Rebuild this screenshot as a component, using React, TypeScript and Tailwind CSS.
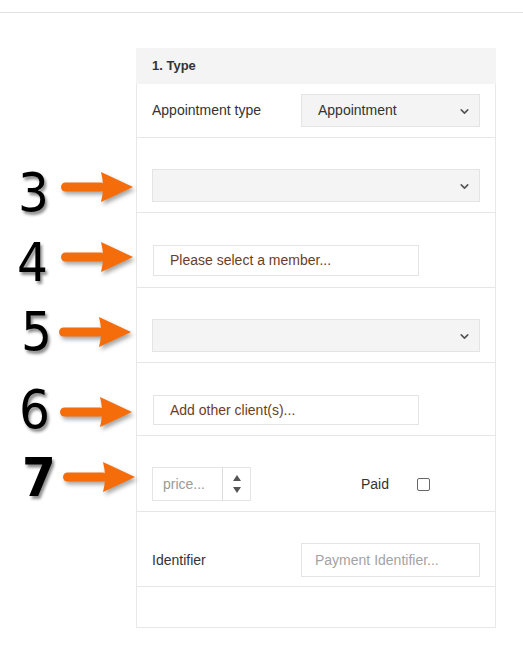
import { ChevronDown } from 'lucide-react'

const font = { fontFamily: '"Liberation Sans", Arial, sans-serif' }

function Arrow({ left, top }: { left: number; top: number }) {
  return (
    <svg
      className="absolute [filter:drop-shadow(2px_3px_2px_rgba(0,0,0,0.35))]"
      style={{ left, top }}
      width="72"
      height="30"
      viewBox="0 0 72 30"
    >
      <rect x="0" y="10.5" width="44" height="9" rx="4.5" fill="#f56d0b" />
      <path d="M40 0 L72 15 L40 30 Q44 15 40 0 Z" fill="#f56d0b" />
    </svg>
  )
}

function Num({ n, left, top, heavy }: { n: string; left: number; top: number; heavy?: boolean }) {
  return (
    <div
      className={`absolute text-[54px] leading-[54px] text-black [text-shadow:2px_3px_3px_rgba(0,0,0,0.45)] ${heavy ? 'font-bold' : 'font-normal'}`}
      style={{ left, top, fontFamily: '"Liberation Sans Narrow", "DejaVu Sans Condensed", sans-serif' }}
    >
      {n}
    </div>
  )
}

function Select({ value, className }: { value?: string; className: string }) {
  return (
    <div
      className={`relative flex h-[33px] items-center border border-[#e4e4e4] bg-[#f4f4f4] pl-[16px] text-[14px] text-[#333] ${className}`}
    >
      {value}
      <ChevronDown size={13} strokeWidth={3} className="absolute right-[8px] top-[10px] text-[#555]" />
    </div>
  )
}

export default function App() {
  const annotations = [
    { n: '3', nl: 18, nt: 166, al: 61, at: 172 },
    { n: '4', nl: 17, nt: 236, al: 61, at: 242 },
    { n: '5', nl: 21, nt: 305, al: 59, at: 317 },
    { n: '6', nl: 19, nt: 383, al: 60, at: 397 },
    { n: '7', nl: 22, nt: 451, al: 63, at: 462, heavy: true },
  ]

  return (
    <div className="relative min-h-[665px] bg-white" style={font}>
      <div className="h-[13px] border-b border-[#e2e2e2]" />

      <div className="ml-[136px] mt-[35px] w-[360px] border-x border-b border-[#e8e8e8]">
        <div className="-mx-px flex h-[36px] items-center bg-[#f4f4f4] px-[16px] text-[13px] font-bold text-[#333]">
          1. Type
        </div>

        <div className="flex h-[54px] items-center border-b border-[#e6e6e6] px-[15px]">
          <span className="w-[149px] text-[14px] text-[#333]">Appointment type</span>
          <Select value="Appointment" className="flex-1" />
        </div>

        <div className="flex h-[75px] items-end border-b border-[#e6e6e6] px-[15px] pb-[10px]">
          <Select className="w-full" />
        </div>

        <div className="flex h-[75px] items-end border-b border-[#e6e6e6] px-[15px] pb-[11px]">
          <div className="ml-px flex h-[31px] w-[266px] items-center border border-[#e4e4e4] pl-[16px] text-[14px] text-[#6b3d24]">
            Please select a member...
          </div>
        </div>

        <div className="flex h-[75px] items-end border-b border-[#e6e6e6] px-[15px] pb-[10px]">
          <Select className="w-full" />
        </div>

        <div className="flex h-[73px] items-end border-b border-[#e6e6e6] px-[15px] pb-[10px]">
          <div className="ml-px flex h-[30px] w-[266px] items-center border border-[#e4e4e4] pl-[16px] text-[14px] text-[#6b3d24]">
            Add other client(s)...
          </div>
        </div>

        <div className="flex h-[76px] items-end border-b border-[#e6e6e6] px-[15px] pb-[10px]">
          <div className="flex w-full items-center">
            <div className="flex h-[34px] w-[99px] border border-[#e4e4e4]">
              <div className="flex w-[70px] items-center border-r border-[#dcdcdc] pl-[10px] text-[14px] text-[#9a9a9a]">
                price...
              </div>
              <div className="flex flex-1 flex-col items-center justify-center gap-[6px]">
                <svg width="8" height="6" viewBox="0 0 8 6">
                  <path d="M4 0 L8 6 L0 6 Z" fill="#555" />
                </svg>
                <svg width="8" height="6" viewBox="0 0 8 6">
                  <path d="M0 0 L8 0 L4 6 Z" fill="#555" />
                </svg>
              </div>
            </div>
            <span className="ml-[110px] text-[14px] text-[#333]">Paid</span>
            <span className="ml-[28px] h-[13px] w-[13px] rounded-[2px] border border-[#666] bg-white" />
          </div>
        </div>

        <div className="flex h-[75px] items-end border-b border-[#e6e6e6] px-[15px] pb-[9px]">
          <div className="flex w-full items-center">
            <span className="w-[149px] text-[14px] text-[#333]">Identifier</span>
            <div className="flex h-[34px] flex-1 items-center border border-[#e4e4e4] pl-[13px] text-[14px] text-[#a3a3a3]">
              Payment Identifier...
            </div>
          </div>
        </div>

        <div className="h-[40px]" />
      </div>

      {annotations.map((a) => (
        <div key={a.n}>
          <Num n={a.n} left={a.nl} top={a.nt} heavy={a.heavy} />
          <Arrow left={a.al} top={a.at} />
        </div>
      ))}
    </div>
  )
}
